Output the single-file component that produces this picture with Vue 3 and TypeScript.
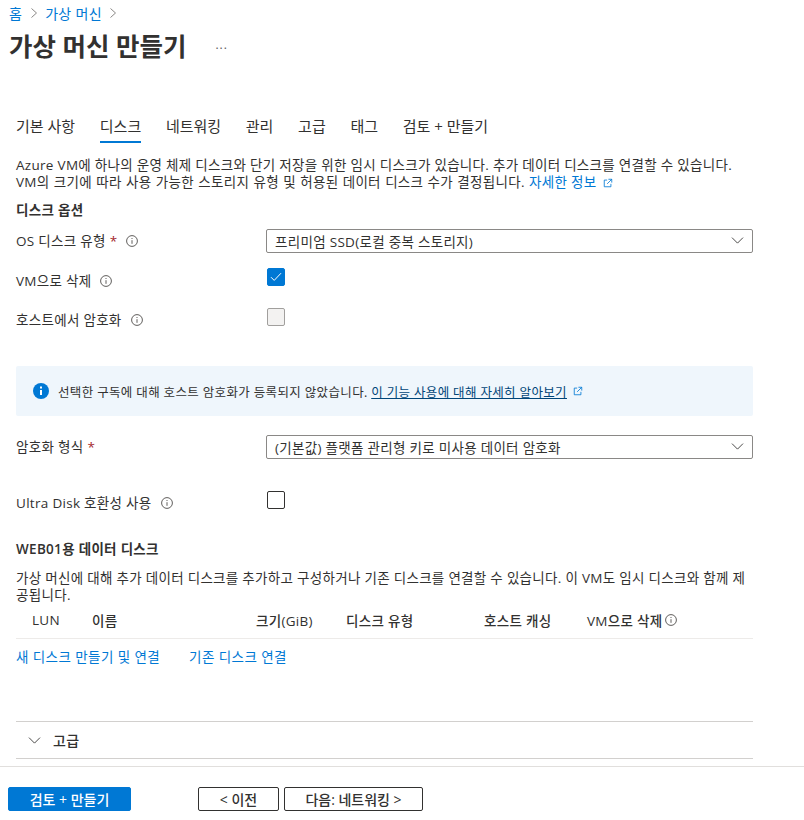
<script setup lang="ts">
const tabs = ["기본 사항", "디스크", "네트워킹", "관리", "고급", "태그", "검토 + 만들기"];
const columns = [
  { label: "LUN", width: 60 },
  { label: "이름", width: 164 },
  { label: "크기(GiB)", width: 90 },
  { label: "디스크 유형", width: 138 },
  { label: "호스트 캐싱", width: 103 },
];
</script>

<template>
  <div class="page">
    <nav class="crumbs">
      <a>홈</a>
      <svg class="crumb-sep" viewBox="0 0 8 12"><path d="M1.5 1.5 6.5 6l-5 4.5" /></svg>
      <a>가상 머신</a>
      <svg class="crumb-sep" viewBox="0 0 8 12"><path d="M1.5 1.5 6.5 6l-5 4.5" /></svg>
    </nav>
    <header class="title-row">
      <h1>가상 머신 만들기</h1>
      <span class="more">...</span>
    </header>

    <main class="content">
      <div class="tabs">
        <span v-for="tab in tabs" :key="tab" class="tab" :class="{ active: tab === '디스크' }">{{ tab }}</span>
      </div>

      <p class="intro">
        Azure VM에 하나의 운영 체제 디스크와 단기 저장을 위한 임시 디스크가 있습니다. 추가 데이터 디스크를 연결할 수 있습니다.<br />
        <span class="line-two">VM의 크기에 따라 사용 가능한 스토리지 유형 및 허용된 데이터 디스크 수가 결정됩니다. </span>
        <a class="link">자세한 정보</a>
        <svg class="ext" viewBox="0 0 12 12"><path d="M5 2.5H1.5v8h8V7M6.5 1.5h4v4M10.5 1.5 5 7" /></svg>
      </p>

      <h2 class="section first">디스크 옵션</h2>

      <div class="row row-os">
        <label>OS 디스크 유형 <span class="req">*</span>
          <svg class="info" viewBox="0 0 12 12"><circle cx="6" cy="6" r="5.4" /><path d="M6 5.2v3.6M6 3v1" /></svg>
        </label>
        <div class="select">프리미엄 SSD(로컬 중복 스토리지)
          <svg class="chev" viewBox="0 0 14 8"><path d="M.7.7 7 7 13.3.7" /></svg>
        </div>
      </div>

      <div class="row row-del">
        <label>VM으로 삭제
          <svg class="info" viewBox="0 0 12 12"><circle cx="6" cy="6" r="5.4" /><path d="M6 5.2v3.6M6 3v1" /></svg>
        </label>
        <span class="check checked">
          <svg viewBox="0 0 12 10"><path d="M1 5.2 4.2 8.4 11 1.2" /></svg>
        </span>
      </div>

      <div class="row row-host">
        <label>호스트에서 암호화
          <svg class="info" viewBox="0 0 12 12"><circle cx="6" cy="6" r="5.4" /><path d="M6 5.2v3.6M6 3v1" /></svg>
        </label>
        <span class="check disabled"></span>
      </div>

      <div class="banner">
        <svg class="banner-icon" viewBox="0 0 16 16"><circle cx="8" cy="8" r="8" /><path d="M8 7v5M8 3.6v1.8" /></svg>
        <span>선택한 구독에 대해 호스트 암호화가 등록되지 않았습니다. <a class="banner-link">이 기능 사용에 대해 자세히 알아보기</a></span>
        <svg class="ext" viewBox="0 0 12 12"><path d="M5 2.5H1.5v8h8V7M6.5 1.5h4v4M10.5 1.5 5 7" /></svg>
      </div>

      <div class="row row-enc">
        <label>암호화 형식 <span class="req">*</span></label>
        <div class="select">(기본값) 플랫폼 관리형 키로 미사용 데이터 암호화
          <svg class="chev" viewBox="0 0 14 8"><path d="M.7.7 7 7 13.3.7" /></svg>
        </div>
      </div>

      <div class="row row-ultra">
        <label>Ultra Disk 호환성 사용
          <svg class="info" viewBox="0 0 12 12"><circle cx="6" cy="6" r="5.4" /><path d="M6 5.2v3.6M6 3v1" /></svg>
        </label>
        <span class="check"></span>
      </div>

      <h2 class="section data">WEB01용 데이터 디스크</h2>
      <p class="data-desc">가상 머신에 대해 추가 데이터 디스크를 추가하고 구성하거나 기존 디스크를 연결할 수 있습니다. 이 VM도 임시 디스크와 함께 제공됩니다.</p>

      <div class="table-head">
        <span v-for="col in columns" :key="col.label" :style="{ width: col.width + 'px' }">{{ col.label }}</span>
        <span class="last">VM으로 삭제
          <svg class="info" viewBox="0 0 12 12"><circle cx="6" cy="6" r="5.4" /><path d="M6 5.2v3.6M6 3v1" /></svg>
        </span>
      </div>

      <div class="disk-links">
        <a class="link">새 디스크 만들기 및 연결</a>
        <a class="link">기존 디스크 연결</a>
      </div>

      <div class="accordion">
        <svg class="chev" viewBox="0 0 14 8"><path d="M.7.7 7 7 13.3.7" /></svg>
        <span>고급</span>
      </div>
    </main>

    <footer class="footer">
      <button class="btn primary">검토 + 만들기</button>
      <button class="btn prev">&lt; 이전</button>
      <button class="btn next">다음: 네트워킹 &gt;</button>
    </footer>
  </div>
</template>

<style>
html, body {
  margin: 0;
  background: #fff;
}
</style>

<style scoped>
.page {
  width: 804px;
  height: 820px;
  overflow: hidden;
  font-family: "Open Sans", "Noto Sans CJK KR", sans-serif;
  font-size: 13.5px;
  letter-spacing: 0.3px;
  color: #323130;
}

/* header */
.crumbs {
  display: flex;
  align-items: center;
  height: 26px;
  padding-left: 9px;
  font-size: 14px;
  color: #0078d4;
}
.crumb-sep {
  width: 8px;
  height: 12px;
  margin: 0 7.5px;
}
.crumb-sep path {
  fill: none;
  stroke: #8a8886;
}
.title-row {
  display: flex;
  align-items: center;
  height: 40px;
  padding-left: 9px;
}
h1 {
  margin: -1px 0 0;
  font-size: 25.5px;
  font-weight: 600;
  letter-spacing: 0;
  line-height: 40px;
}
.more {
  margin-left: 29px;
  margin-top: -4px;
  font-size: 12px;
  color: #605e5c;
  letter-spacing: 1px;
}

/* tabs */
.content {
  width: 737px;
  margin-left: 16px;
  height: 700px;
}
.tabs {
  display: flex;
  gap: 24.7px;
  height: 77px;
  padding-top: 49px;
  box-sizing: border-box;
  font-size: 15px;
  letter-spacing: 0;
}
.tab {
  height: 28px;
  line-height: 22px;
}
.tab.active {
  border-bottom: 2px solid #0078d4;
  box-sizing: border-box;
}
.intro {
  margin: 14px 0 0;
  line-height: 17px;
}
.line-two {
  word-spacing: 0.5px;
}
.link {
  color: #0078d4;
}
.ext {
  display: inline-block;
  width: 10px;
  height: 10px;
  margin-left: 3px;
  vertical-align: -1px;
}
.ext path {
  fill: none;
  stroke: #0078d4;
}
.intro .ext {
  margin-left: 6px;
}

/* form rows */
.section {
  margin: 0;
  font-size: 13.5px;
  font-weight: 600;
  line-height: 18px;
}
.section.first {
  margin-top: 10px;
}
.row {
  display: grid;
  grid-template-columns: 250px 487px;
  align-items: start;
  height: 24px;
}
.row label {
  display: flex;
  align-items: center;
  gap: 4px;
  line-height: 24px;
}
.req {
  color: #a4262c;
}
.info {
  width: 12px;
  height: 12px;
  margin-left: 5px;
}
.info circle,
.info path {
  fill: none;
  stroke: #605e5c;
}
.select {
  display: flex;
  align-items: center;
  justify-content: space-between;
  box-sizing: border-box;
  height: 24px;
  padding: 0 8px 1px;
  border: 1px solid #8a8886;
  border-radius: 2px;
}
.chev {
  width: 13px;
  height: 7px;
  flex: none;
}
.chev path {
  fill: none;
  stroke: #323130;
  stroke-width: 1;
}
.check {
  display: flex;
  align-items: center;
  justify-content: center;
  box-sizing: border-box;
  width: 18px;
  height: 18px;
  margin-left: 1px;
  border: 1px solid #323130;
  border-radius: 2px;
}
.check.checked {
  background: #0078d4;
  border-color: #0078d4;
}
.check.checked svg {
  width: 12px;
  height: 10px;
}
.check.checked path {
  fill: none;
  stroke: #fff;
}
.check.disabled {
  background: #f3f2f1;
  border-color: #a19f9d;
}
.row-os {
  margin-top: 10px;
}
.row-del {
  margin-top: 15px;
}
.row-del label {
  padding-top: 1px;
}
.row-host {
  margin-top: 16px;
}

/* banner */
.banner {
  display: flex;
  align-items: center;
  height: 50px;
  margin-top: 34px;
  padding-left: 17px;
  background: #eff6fc;
  border-radius: 2px;
  font-size: 12.5px;
  letter-spacing: 0.35px;
}
.banner-icon {
  width: 16px;
  height: 16px;
  margin-right: 9px;
}
.banner-icon circle {
  fill: #0078d4;
}
.banner-icon path {
  fill: none;
  stroke: #fff;
  stroke-width: 2;
}
.banner-link {
  color: #004578;
  text-decoration: underline;
}
.banner .ext {
  margin-left: 6px;
}

.row-enc {
  margin-top: 19px;
}
.row-ultra {
  margin-top: 32px;
}

/* data disks */
.section.data {
  margin-top: 25px;
}
.data-desc {
  margin: 12px 0 0;
  line-height: 17px;
}
.table-head {
  display: flex;
  height: 35px;
  padding: 0 0 2px 16px;
  box-sizing: border-box;
  align-items: center;
  border-bottom: 1px solid #edebe9;
  font-weight: 500;
}
.table-head .last {
  display: flex;
  align-items: center;
}
.table-head .info {
  margin-left: 3px;
}
.disk-links {
  display: flex;
  gap: 29px;
  margin-top: 9px;
  line-height: 18px;
  letter-spacing: 0.42px;
}

/* accordion */
.accordion {
  display: flex;
  align-items: center;
  gap: 12px;
  box-sizing: border-box;
  height: 38px;
  margin-top: 55px;
  padding-left: 12px;
  border-top: 1px solid #d2d0ce;
  border-bottom: 1px solid #d2d0ce;
  font-size: 14px;
  font-weight: 500;
}

/* footer */
.footer {
  display: flex;
  align-items: flex-start;
  box-sizing: border-box;
  height: 54px;
  padding: 20px 0 0 8px;
  border-top: 1px solid #e1dfdd;
}
.btn {
  box-sizing: border-box;
  height: 24px;
  padding: 0 0 1px;
  border: 1px solid #323130;
  border-radius: 2px;
  background: #fff;
  color: #323130;
  font-family: inherit;
  font-size: 14px;
  font-weight: 500;
}
.primary {
  width: 123px;
  border-color: #0078d4;
  background: #0078d4;
  color: #fff;
}
.prev {
  width: 81px;
  margin-left: 67px;
}
.next {
  width: 139px;
  margin-left: 5px;
}
</style>
